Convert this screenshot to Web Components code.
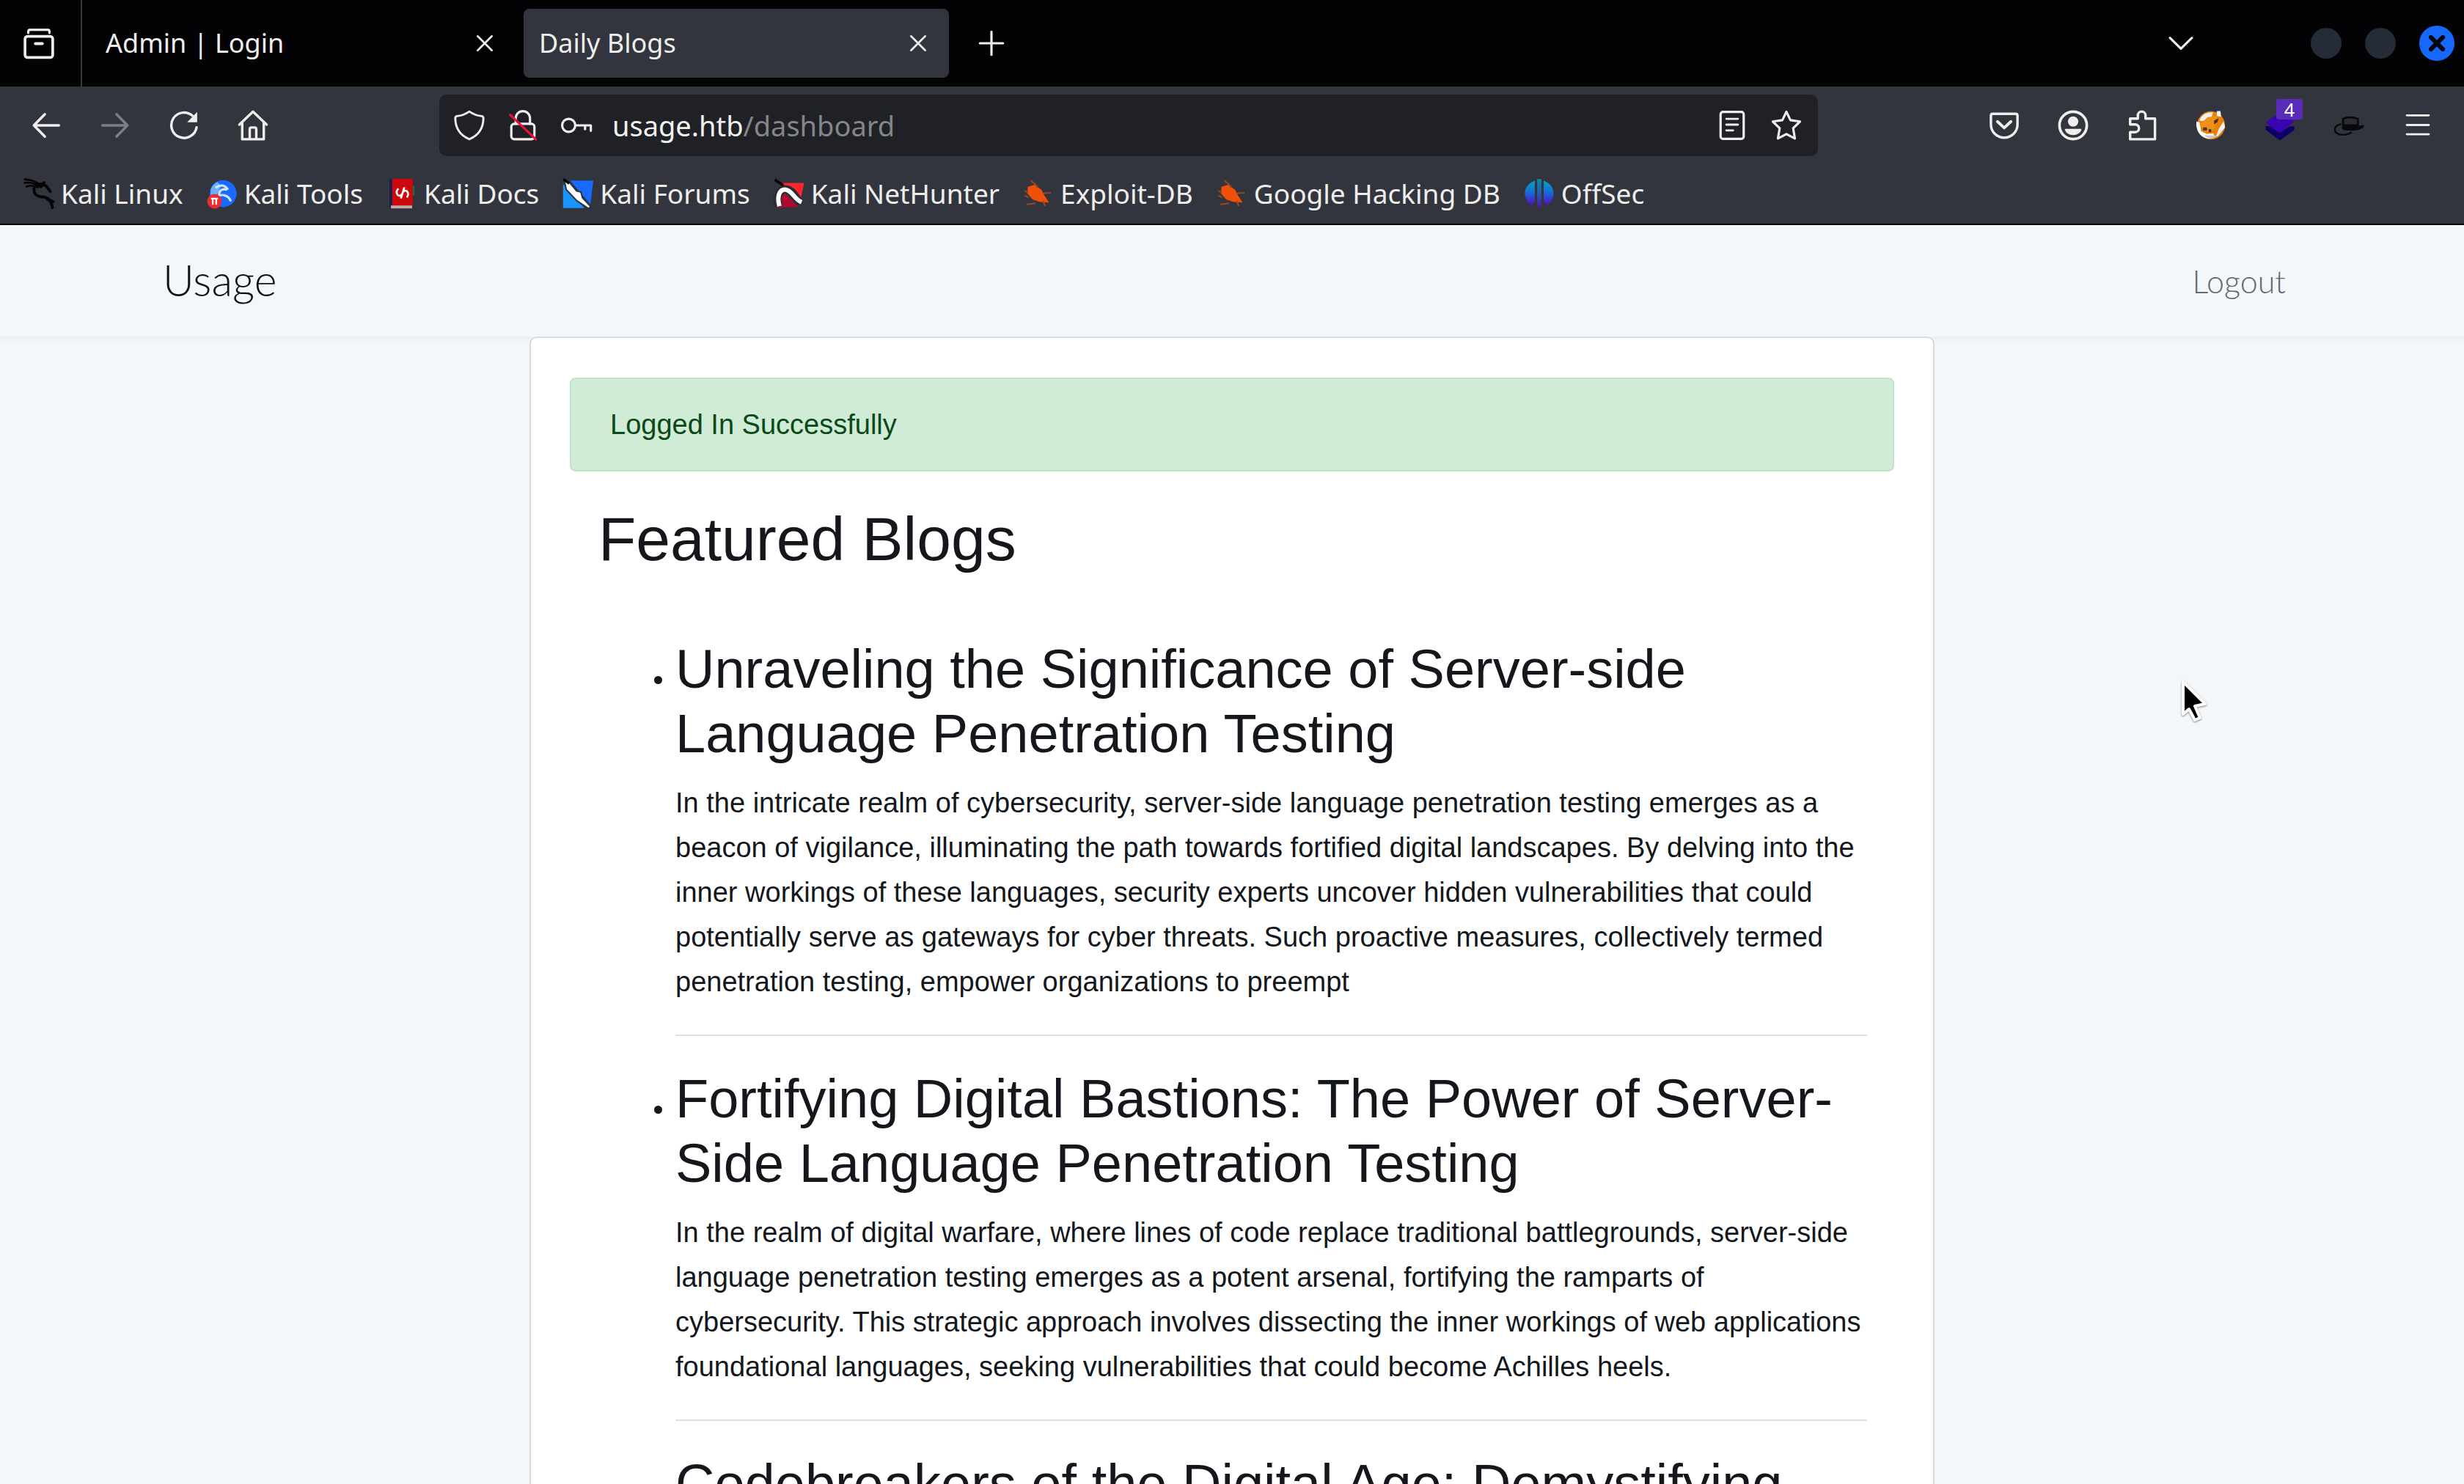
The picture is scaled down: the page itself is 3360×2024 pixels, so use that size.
<!DOCTYPE html>
<html lang="en">
<head>
<meta charset="utf-8">
<title>Daily Blogs</title>
<style>
html, body { margin: 0; height: 100%; }
body { background: #f3f7fa; font-family: "Liberation Sans", Arial, sans-serif; color: #14171c; overflow: hidden; }
</style>
</head>
<body>
<browser-window>
  <tab-strip slot="chrome">
    <browser-tab>Admin | Login</browser-tab>
    <browser-tab active>Daily Blogs</browser-tab>
  </tab-strip>
  <nav-toolbar slot="chrome" host="usage.htb" path="/dashboard"></nav-toolbar>
  <bookmark-bar slot="chrome">
    <bookmark-link icon="kali">Kali Linux</bookmark-link>
    <bookmark-link icon="tools">Kali Tools</bookmark-link>
    <bookmark-link icon="docs">Kali Docs</bookmark-link>
    <bookmark-link icon="forums">Kali Forums</bookmark-link>
    <bookmark-link icon="nethunter">Kali NetHunter</bookmark-link>
    <bookmark-link icon="bug">Exploit-DB</bookmark-link>
    <bookmark-link icon="bug">Google Hacking DB</bookmark-link>
    <bookmark-link icon="offsec">OffSec</bookmark-link>
  </bookmark-bar>
  <site-header brand="Usage">Logout</site-header>
  <content-card>
    <success-alert>Logged In Successfully</success-alert>
    <blog-list heading="Featured Blogs">
      <blog-post heading="Unraveling the Significance of Server-side Language Penetration Testing">In the intricate realm of cybersecurity, server-side language penetration testing emerges as a beacon of vigilance, illuminating the path towards fortified digital landscapes. By delving into the inner workings of these languages, security experts uncover hidden vulnerabilities that could potentially serve as gateways for cyber threats. Such proactive measures, collectively termed penetration testing, empower organizations to preempt</blog-post>
      <blog-post heading="Fortifying Digital Bastions: The Power of Server-Side Language Penetration Testing">In the realm of digital warfare, where lines of code replace traditional battlegrounds, server-side language penetration testing emerges as a potent arsenal, fortifying the ramparts of cybersecurity. This strategic approach involves dissecting the inner workings of web applications foundational languages, seeking vulnerabilities that could become Achilles heels.</blog-post>
      <blog-post heading="Codebreakers of the Digital Age: Demystifying"></blog-post>
    </blog-list>
  </content-card>
  <mouse-pointer slot="overlay"></mouse-pointer>
</browser-window>

<script>
const line = (body, w = 1) => `<g fill="none" stroke="currentColor" stroke-width="${w}" stroke-linecap="round" stroke-linejoin="round">${body}</g>`;
const ICONS = {
  recent: line('<path d="M2.5 2.600V1.900q0-.9.9-.9h9.200q.9 0 .9.9v.7" stroke-width="1.200"/><rect x=".8" y="4.400" width="14.400" height="11" rx="1.300" stroke-width="1.400"/><path d="M6.200 8.200h3.600" stroke-width="1.500"/>'),
  close: line('<path d="M4.300 4.300l7.400 7.400M11.700 4.300l-7.400 7.400"/>'),
  plus: line('<path d="M8 2v12M2 8h12"/>', 1.2),
  chevron: line('<path d="M2.300 5.200L8 10.800l5.700-5.600"/>', 1.2),
  back: line('<path d="M1.600 8h13M7.300 2.200L1.600 8l5.700 5.800"/>', 1.3),
  forward: line('<path d="M14.400 8h-13M8.700 2.200L14.400 8l-5.700 5.800"/>', 1.3),
  reload: line('<path d="M12.600 3.200A6.600 6.600 0 1 0 14.500 9"/>', 1.3) + '<path fill="currentColor" d="M14.800 1v5.400H9.600z"/>',
  home: line('<path d="M.9 7.600L8 .9l7.100 6.700M2.400 6.400v8.800h11.200V6.400M6.300 15V10q0-.9.9-.9h1.600q.9 0 .9.9v5"/>', 1.3),
  shield: line('<path d="M8 .8C6.200 2 3.600 3 1.500 3.200c-.5.2-.8.5-.8 1 0 5.300 2.600 9 7.300 11 4.700-2 7.300-5.700 7.300-11 0-.5-.3-.8-.8-1C12.400 3 9.800 2 8 .8z"/>', 1.1),
  lock: line('<path d="M4.300 7.200V4.300a3.700 3.700 0 0 1 7.400 0v2.900"/><rect x="2" y="7.200" width="12" height="8" rx="1.500"/>', 1.2) + '<path stroke="#e8123f" stroke-width="1.200" stroke-linecap="round" d="M1.400 2.500l13.400 12.800"/>',
  key: line('<circle cx="4" cy="8" r="3.400"/><path d="M7.500 8h8v2.800M12.500 8v2"/>', 1.2),
  reader: line('<rect x="2" y="1" width="12" height="14" rx="1.200" stroke-width="1.200"/><path d="M5 4.600h6M5 7.600h6M5 10.600h3.500" stroke-width="1.100"/>'),
  star: line('<path d="M8 .9l2.100 4.400 5 .7-3.600 3.500.9 5.300L8 12.500l-4.400 2.300.9-5.300L.9 6l5-.7z"/>', 1.2),
  pocket: line('<path d="M2 2h12q.9 0 .9 1v4.500a6.900 6.900 0 0 1-13.800 0V3q0-1 .9-1z" stroke-width="1.300"/><path d="M4.500 6L8 9.300 11.500 6" stroke-width="1.500"/>'),
  account: line('<circle cx="8" cy="8" r="7.100"/>', 1.4) + '<circle cx="8" cy="6" r="2.700" fill="currentColor"/><path fill="currentColor" d="M3.700 9.800h8.600c0 1.500-1.700 3.200-4.300 3.200s-4.300-1.700-4.300-3.200z"/>',
  puzzle: line('<path d="M1.800 15.200V11.500h2.600a2 2 0 0 0 0-4H1.800V4.500h4V2.800a2 2 0 0 1 4 0v1.700h4.900v10.700z"/>', 1.3),
  fox: '<circle cx="8" cy="8" r="7.300" fill="#e8800b"/><path d="M2 5.500C3 2.500 6 1 9 1.300L8.400 3.500 3.700 5.800zM11 .6h1.900l.4 2.800-2.300-.3zM14.500 6l.8 3-3.800 4.600-1 .3 1.500-4z" fill="#f2f2f2"/><path d="M.4 6l1.700.5.8 4.500 3 1.500 3.400-.3.500 1.600-3 1.200C3 14.500.6 11.500.4 8z" fill="#fff"/><path d="M3.300 6.600l3-2.900 5.300-.7-.7 3-1.700 4.600-4.500.4-2.400-3z" fill="#f09018"/><path d="M3.900 9h2v1.700h-2zM6.800 10h1.300v1.500H6.800zM9.600 5.500l2.300-1.300-.5 2-1.800 1.300z" fill="#433425"/><path d="M4.500 13l7 .3-2.300 1.400-3 0z" fill="#c9cdd0"/>',
  layers: '<path fill="#0e0068" d="M.5 8.500H3l5 3.300 5-3.300h2.500v1.800L8 15.800.5 10.300z"/><path fill="#3a04ae" d="M8 1l7.500 5L8 12 .5 6.500z"/>',
  hat: '<path d="M4.400 9.800V4.300Q8.800 2.200 13.200 4.300v3.900l2.700-.4-.3 1.300q-2.800 1.900-7.600 1.600-3 0-3.600-.9z" fill="#08090a"/><path d="M5.500 7.400V4.900q3.300-1.300 6.700 0v2.500z" fill="#2b2d33"/><path d="M4 7.300C-.6 8.500-.1 12.300 4 12.800q3 .3 5.500-1.300" fill="none" stroke="#090a0c" stroke-width=".9"/>',
  menu: line('<path d="M2.300 2.800h11.400M2.300 7.800h11.400M2.300 12.600h11.400"/>', 1.1),
  kali: '<g fill="none" stroke="#050505" stroke-linecap="round" stroke-linejoin="round"><path d="M.7.6c3 .2 5 .6 7 2.300M.6 2.400C3.500 2 6 2.700 8 4M1.600 4.400C4 3.500 6 4 7.500 4.800" stroke-width="1"/><path d="M7 3.500c2-.8 4-.4 5.500 1.400l1.400 2M9 4.500l1.700-2.200M5.600 5c-.6 3 1 4.500 4 4.700 3 .2 5 1.600 5.400 5.600M12.500 11l3 1.200" stroke-width="1.500"/></g>',
  tools: '<circle cx="8.500" cy="8" r="7" fill="#1769ff"/><path d="M2 6a7 7 0 0 1 3.500-4l2 2-4 8L2 10z" fill="#6ab2ff"/><path d="M4.500 5c3-2 5-1.400 6.500 1M10.500 6c-2.500-.8-4.500.5-4 3 2-.6 4.800 0 6 3" fill="none" stroke="#cfe5ff" stroke-width="1.200"/><circle cx="4" cy="12" r="3.800" fill="#ee2b30"/><path d="M2.200 10.600h3.600M3.100 10.800v3M4.900 10.800v3" stroke="#fff" stroke-width=".9" fill="none"/>',
  docs: '<path fill="#17204f" d="M1.600.5h1.700v15H1.600z"/><path fill="#cc080c" d="M3 .3h10.700v14H3z"/><path fill="#176b4d" d="M13.700 4h.9v5h-.9z"/><path fill="#c8aaaa" d="M2.300 14.200h11v1.500h-11z"/><path d="M6.200 5.400q-1.700 1.800-.3 3.400 1.400.9 2.300-.8.900-2 2.200-1.400 1.600 1.200.2 3.400M9.300 4.700L7.500 10.500" fill="none" stroke="#fff" stroke-width="1"/>',
  forums: '<path fill="#1a93ff" d="M.3 3v12.500h11z"/><path fill="#1769ff" d="M4 1.200h12l-1.500 12.400z"/><path d="M.8.600l1.800.3 4.700 5.700 2.300.6.800 3 4.300 4.600-1.200 1-6-4L2 6z" fill="#fff" stroke="#30343c" stroke-width=".8"/><path d="M.5.5l3 2.300" stroke="#000" stroke-width="1.300"/>',
  nethunter: '<path fill="#ff272b" d="M4 2.500h11.800L13.800 12z"/><path fill="#b00a32" d="M.5 12L5 7l8 8H1z"/><path d="M2.600 14.500C1 8 4 5 7.500 6c3 1 3.500 4 6.500 7" fill="none" stroke="#2a2c32" stroke-width="4.200"/><path d="M3 14.600C1.200 8 4 5 7 6.200c3 1 3.500 4.500 7.500 6.300" fill="none" stroke="#fff" stroke-width="2.300"/><path d="M.6.800l4.400 2.900" stroke="#08080a" stroke-width="1.400"/>',
  bug: '<path d="M2.500 4.500L6 3.400l3.600 2.600 1.600 3 2.300 3.700-4.600-.3-3.900-1.400L2.300 8z" fill="#ee5007"/><path d="M4 1.200l2.300 1.900 1.600 2M.8 6.500l1.800 1M2 13.600l4.500-.6M10.500 12l1 2.500M10.500 7.800l4-.2M.8 9l2 1" stroke="#94491f" stroke-width=".8" fill="none"/>',
  offsec: '<defs><linearGradient id="g" x1="0" y1="0" x2="0" y2="1"><stop offset="0" stop-color="#00a7c5"/><stop offset=".5" stop-color="#1769d6"/><stop offset="1" stop-color="#5a08c9"/></linearGradient></defs><path fill="url(#g)" d="M5.700 1.300v10.400L4 14C-.8 11-.9 3.500 5.700 1.300zM10.300 1.300v10.400L12 14c4.800-3 4.900-10.500-1.700-12.700z"/><path fill="url(#g)" opacity=".75" d="M6.900.5h2.200v13.700L8 15.800l-1.100-1.600z"/>',
  winclose: '<circle cx="8" cy="8" r="8" fill="#1668fb"/><path d="M5.300 5.300l5.400 5.400M10.700 5.300l-5.400 5.400" stroke="#05070d" stroke-width="2" stroke-linecap="round"/>',
  windot: '<circle cx="8" cy="8" r="8" fill="#262b38"/>'
};

function component(name, css, html, setup) {
  customElements.define(name, class extends HTMLElement {
    constructor() {
      super();
      this.attachShadow({ mode: 'open' });
    }
    connectedCallback() {
      this.shadowRoot.innerHTML = `<style>:host,*{box-sizing:border-box}${css}</style>` + html;
      if (setup) setup(this, this.shadowRoot);
    }
  });
}

component('ui-icon', ':host{display:block;width:42px;height:42px;flex:none}svg{display:block;width:100%;height:100%;overflow:visible}', '',
  (el, root) => root.innerHTML += `<svg viewBox="0 0 16 16" aria-hidden="true">${ICONS[el.getAttribute('name')] || ''}</svg>`);

component('icon-button', `
  :host{display:block;flex:none;width:94px;height:84px}
  button{width:100%;height:100%;display:grid;place-items:center;background:none;border:0;padding:0;color:inherit}
  button:disabled{opacity:.4}`,
  '<button type="button"><ui-icon></ui-icon></button>',
  (el, root) => {
    root.querySelector('ui-icon').setAttribute('name', el.getAttribute('icon'));
    const b = root.querySelector('button');
    b.setAttribute('aria-label', el.getAttribute('label'));
    b.disabled = el.hasAttribute('disabled');
    root.querySelector('ui-icon').connectedCallback();
  });

component('browser-window', `
  :host{display:flex;flex-direction:column;height:100vh}
  .chrome{flex:none;font-family:"Noto Sans",sans-serif;font-size:36px;line-height:48px;color:#eeeeec;border-bottom:2px solid #050507;background:#33353e}
  .page{flex:1;min-height:0;overflow-y:auto;scrollbar-width:none}`,
  '<header class="chrome"><slot name="chrome"></slot></header><main class="page"><slot></slot></main><slot name="overlay"></slot>');

component('tab-strip', `
  :host{display:flex;align-items:center;gap:11px;height:118px;background:#030305}
  .recent{align-self:stretch;display:flex;align-items:center;justify-content:flex-start;width:112px;border-right:2px solid #3a3a3c}
  .recent icon-button{width:106px}
  .fill{flex:1}
  .menu{margin-right:119px}
  .controls{display:flex;align-items:center;gap:32px;padding-right:13px}
  .controls button{display:block;background:none;border:0;padding:0}
  .close{width:48px;height:48px}`, `
  <div class="recent"><icon-button icon="recent" label="Recent tabs"></icon-button></div>
  <slot></slot>
  <icon-button icon="plus" label="New tab"></icon-button>
  <div class="fill"></div>
  <icon-button class="menu" icon="chevron" label="List all tabs"></icon-button>
  <div class="controls">
    <button aria-label="Minimize"><ui-icon name="windot"></ui-icon></button>
    <button aria-label="Maximize"><ui-icon name="windot"></ui-icon></button>
    <button aria-label="Close window"><ui-icon class="close" name="winclose"></ui-icon></button>
  </div>`);

component('browser-tab', `
  :host{display:flex;align-items:center;width:580px;height:94px;padding:0 21px;border-radius:8px}
  :host([active]){background:#33353e}
  span{flex:1;white-space:nowrap}
  icon-button{width:42px}`,
  '<span><slot></slot></span><icon-button icon="close" label="Close tab"></icon-button>');

component('nav-toolbar', `
  :host{display:flex;align-items:center;height:105px;padding:0 16px}
  .url{flex:0 1 1880px;min-width:0;margin:0 auto;height:84px;display:flex;align-items:center;padding:0 20px;background:#202126;border-radius:10px;font-size:38px}
  .url>ui-icon{margin-right:31px}
  .url>ui-icon:nth-of-type(3){margin-right:28px}
  input{field-sizing:content;min-width:0;background:none;border:0;padding:0;font:inherit;color:#f0f0ee;outline:0}
  .path{flex:1;color:#85868a}
  .url icon-button{width:74px}
  .url icon-button:last-child{margin-right:-14px}
  .ext{position:relative}
  .badge{position:absolute;left:42px;top:6px;width:36px;height:28px;border-radius:3px;background:#5a2ab8;color:#fff;font-size:25px;line-height:28px;text-align:center}`, `
  <icon-button icon="back" label="Back"></icon-button>
  <icon-button icon="forward" label="Forward" disabled></icon-button>
  <icon-button icon="reload" label="Reload"></icon-button>
  <icon-button icon="home" label="Home"></icon-button>
  <div class="url">
    <ui-icon name="shield"></ui-icon><ui-icon name="lock"></ui-icon><ui-icon name="key"></ui-icon>
    <input type="text" aria-label="Address"><span class="path"></span>
    <icon-button icon="reader" label="Reader view"></icon-button>
    <icon-button icon="star" label="Bookmark this page"></icon-button>
  </div>
  <icon-button icon="pocket" label="Save to Pocket"></icon-button>
  <icon-button icon="account" label="Account"></icon-button>
  <icon-button icon="puzzle" label="Extensions"></icon-button>
  <icon-button icon="fox" label="FoxyProxy"></icon-button>
  <div class="ext"><icon-button icon="layers" label="Wappalyzer"></icon-button><span class="badge">4</span></div>
  <icon-button icon="hat" label="Hat"></icon-button>
  <icon-button icon="menu" label="Menu"></icon-button>`,
  (el, root) => {
    const input = root.querySelector('input');
    input.value = el.getAttribute('host');
    root.querySelector('.path').textContent = el.getAttribute('path');
  });

component('bookmark-bar', ':host{display:flex;align-items:center;gap:32px;height:82px;padding:0 32px;font-size:37px}', '<slot></slot>');

component('bookmark-link', `
  a{display:flex;align-items:center;gap:9px;color:inherit;text-decoration:none;white-space:nowrap}`,
  '<a href="#"><ui-icon></ui-icon><span><slot></slot></span></a>',
  (el, root) => {
    const icon = root.querySelector('ui-icon');
    icon.setAttribute('name', el.getAttribute('icon'));
    icon.connectedCallback();
  });

component('site-header', `
  :host{display:block;font-family:Lato,sans-serif;font-weight:300;box-shadow:0 5px 10px rgba(0,0,0,.04)}
  nav{display:flex;align-items:center;justify-content:space-between;height:152px;max-width:2916px;margin:0 auto}
  a{text-decoration:none}
  .brand{font-size:59px;color:#111;padding-bottom:4px}
  .link{font-size:43px;color:#66686a;padding:0 21px}`,
  '<nav><a class="brand" href="#"></a><a class="link" href="#"><slot></slot></a></nav>',
  (el, root) => root.querySelector('.brand').textContent = el.getAttribute('brand'));

component('content-card', `
  :host{display:block;position:relative;max-width:1916px;margin:0 auto;padding:54px 53px;background:#fff;border:2px solid #d9d9d9;border-radius:10px;font-size:38px;line-height:61px}`,
  '<slot></slot>');

component('success-alert', `
  :host{display:block}
  div{padding:32px 53px 31px;margin-bottom:42px;background:#d0ebd6;border:2px solid #bde5c7;border-radius:8px;color:#0b4a17}`,
  '<div role="alert"><slot></slot></div>');

component('blog-list', `
  :host{display:block;padding:0 37px 0 39px}
  h2{margin:0 0 83px;font-size:84px;line-height:101px;font-weight:400}
  ul{margin:0;padding:0 0 0 105px}`,
  '<h2></h2><ul><slot></slot></ul>',
  (el, root) => root.querySelector('h2').textContent = el.getAttribute('heading'));

component('blog-post', `
  :host{display:list-item}
  h3{margin:0 0 20px;font-size:74px;line-height:88px;font-weight:400}
  p{margin:0}
  hr{margin:41px 0 42px;border:0;border-top:2px solid #e0e0e0}`,
  '<h3></h3><p><slot></slot></p><hr>',
  (el, root) => {
    el.setAttribute('role', 'listitem');
    root.querySelector('h3').textContent = el.getAttribute('heading');
  });

component('mouse-pointer', `
  :host{position:absolute;left:2974px;top:926px;width:38px;height:60px;pointer-events:none}
  svg{display:block;width:100%;height:100%;filter:drop-shadow(0 1px 1px rgba(0,0,0,.5))}`,
  '<svg viewBox="0 0 38 60"><path d="M3 4v44l8-7 8 15 7-3-7-16 14-3z" fill="#000" stroke="#fff" stroke-width="4" stroke-linejoin="round"/></svg>');
</script>
</body>
</html>
